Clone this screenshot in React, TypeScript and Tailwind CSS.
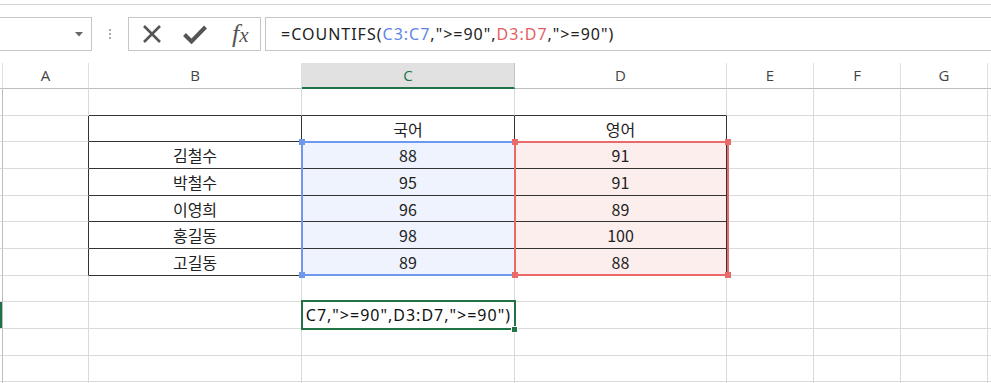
import React from 'react'

const COLS = [
  { key: '', w: 3 },
  { key: 'A', w: 86 },
  { key: 'B', w: 213 },
  { key: 'C', w: 213 },
  { key: 'D', w: 212 },
  { key: 'E', w: 87 },
  { key: 'F', w: 87 },
  { key: 'G', w: 87 },
]

const ROW_H = [27, 26, 27, 27, 26, 27, 27, 26, 27, 27, 26, 27]

const DATA: Record<number, string[]> = {
  2: ['', '국어', '영어'],
  3: ['김철수', '88', '91'],
  4: ['박철수', '95', '91'],
  5: ['이영희', '96', '89'],
  6: ['홍길동', '98', '100'],
  7: ['고길동', '89', '88'],
}

const kr = { fontFamily: '"Noto Sans CJK KR", "Noto Sans", sans-serif' }
const latin = { fontFamily: '"Noto Sans", "Noto Sans CJK KR", sans-serif' }

function Cell({ r, c }: { r: number; c: number }) {
  const col = COLS[c]
  const inTable = r >= 2 && r <= 7
  const blackRight = inTable && c >= 1 && c <= 4
  const blackBottom = c >= 2 && c <= 4 && r >= 1 && r <= 7
  let bg = 'bg-white'
  if (r >= 3 && r <= 7 && c === 3) bg = 'bg-[#eef3fd]'
  if (r >= 3 && r <= 7 && c === 4) bg = 'bg-[#fdeeee]'
  const text = DATA[r] && c >= 2 && c <= 4 ? DATA[r][c - 2] : ''
  return (
    <div
      className={`flex shrink-0 items-center justify-center border-r border-b text-[16px] text-[#222] ${bg} ${
        blackRight ? 'border-r-[#333]' : c === 0 ? 'border-r-[#bdbdbd]' : 'border-r-[#dadada]'
      } ${blackBottom ? 'border-b-[#333]' : 'border-b-[#dadada]'}`}
      style={{ width: col.w, height: ROW_H[r - 1] }}
    >
      {c === 0 && r === 9 ? <div className="h-full w-full bg-[#217346]" /> : null}
      <span style={kr} className="leading-none">
        {text}
      </span>
    </div>
  )
}

export default function App() {
  return (
    <div className="relative h-[383px] w-[991px] overflow-hidden bg-white">
      {/* top strip */}
      <div className="h-[5px] border-b border-[#d5d5d5]" />

      {/* formula bar */}
      <div className="flex h-[58px] items-start pt-[12px]">
        <div className="ml-[-4px] flex h-[34px] w-[96px] items-center justify-end border border-[#c6c6c6] pr-[8px]">
          <svg width="8" height="5" viewBox="0 0 8 5">
            <path d="M0 0h8L4 4.5z" fill="#666" />
          </svg>
        </div>
        <div className="flex h-[34px] w-[36px] flex-col items-center justify-center gap-[2px]">
          <span className="h-[2px] w-[2px] bg-[#aaa]" />
          <span className="h-[2px] w-[2px] bg-[#aaa]" />
          <span className="h-[2px] w-[2px] bg-[#aaa]" />
        </div>
        <div className="flex h-[34px] w-[133px] items-center border border-[#c6c6c6]">
          <div className="flex w-[44px] justify-center pl-[2px]">
            <svg width="20" height="20" viewBox="0 0 20 20">
              <path d="M2 2L18 18M18 2L2 18" stroke="#555" strokeWidth="2.6" />
            </svg>
          </div>
          <div className="flex w-[44px] justify-center">
            <svg width="24" height="20" viewBox="0 0 24 20">
              <path d="M1.5 10.5L8.5 17.5L22.5 3" stroke="#555" strokeWidth="4" fill="none" />
            </svg>
          </div>
          <div className="flex w-[44px] justify-center pl-[4px]">
            <span
              className="text-[26px] italic leading-none text-[#555]"
              style={{ fontFamily: '"Liberation Serif", "DejaVu Serif", serif' }}
            >
              <span>f</span>
              <span className="text-[21px]">x</span>
            </span>
          </div>
        </div>
        <div
          className="ml-[4px] flex h-[34px] flex-1 items-center border border-r-0 border-[#c6c6c6] pl-[15px] text-[16px] tracking-[1px] text-[#222]"
          style={latin}
        >
          <span>=COUNTIFS(</span>
          <span className="text-[#5f86e6]">C3:C7</span>
          <span>,"&gt;=90",</span>
          <span className="text-[#e35f5f]">D3:D7</span>
          <span>,"&gt;=90")</span>
        </div>
      </div>

      {/* column header */}
      <div className="flex h-[26px]">
        {COLS.map((col, i) => (
          <div
            key={i}
            className={`flex shrink-0 items-center justify-center border-r text-[15px] ${
              col.key === 'C'
                ? 'border-b-2 border-r-[#c6c6c6] border-b-[#217346] bg-[#e1e1e1] text-[#217346]'
                : 'border-b border-r-[#e0e0e0] border-b-[#bdbdbd] text-[#444]'
            } ${i === 0 ? 'border-r-[#bdbdbd]' : ''}`}
            style={{ width: col.w, fontFamily: '"Open Sans", "Noto Sans", sans-serif' }}
          >
            {col.key}
          </div>
        ))}
        <div className="flex-1 border-b border-[#bdbdbd]" />
      </div>

      {/* grid */}
      {ROW_H.map((_, ri) => {
        const r = ri + 1
        return (
          <div key={r} className="flex">
            {COLS.map((_, c) => (
              <Cell key={c} r={r} c={c} />
            ))}
            <div className="flex-1 border-b border-[#dadada]" style={{ height: ROW_H[ri] }} />
          </div>
        )
      })}

      {/* blue range C3:C7 */}
      <div className="absolute left-[301px] top-[141px] h-[135px] w-[215px] border-2 border-[#6e97ee]" />
      <span className="absolute left-[299px] top-[139px] h-[6px] w-[6px] bg-[#6e97ee]" />
      <span className="absolute left-[299px] top-[272px] h-[6px] w-[6px] bg-[#6e97ee]" />

      {/* red range D3:D7 */}
      <div className="absolute left-[514px] top-[141px] h-[135px] w-[215px] border-2 border-[#ea6969]" />
      <span className="absolute left-[512px] top-[139px] h-[6px] w-[6px] bg-[#ea6969]" />
      <span className="absolute left-[725px] top-[139px] h-[6px] w-[6px] bg-[#ea6969]" />
      <span className="absolute left-[512px] top-[272px] h-[6px] w-[6px] bg-[#ea6969]" />
      <span className="absolute left-[725px] top-[272px] h-[6px] w-[6px] bg-[#ea6969]" />

      {/* active cell (editing, shows end of formula) */}
      <div className="absolute left-[301px] top-[300px] flex h-[30px] w-[215px] items-center justify-end overflow-hidden border-2 border-[#217346] bg-white pr-[3px]">
        <span className="whitespace-nowrap text-[16px] tracking-[1px] text-[#111]" style={latin}>
          C7,"&gt;=90",D3:D7,"&gt;=90")
        </span>
      </div>
      <span className="absolute left-[511px] top-[326px] h-[7px] w-[7px] border border-white bg-[#217346]" />
    </div>
  )
}
